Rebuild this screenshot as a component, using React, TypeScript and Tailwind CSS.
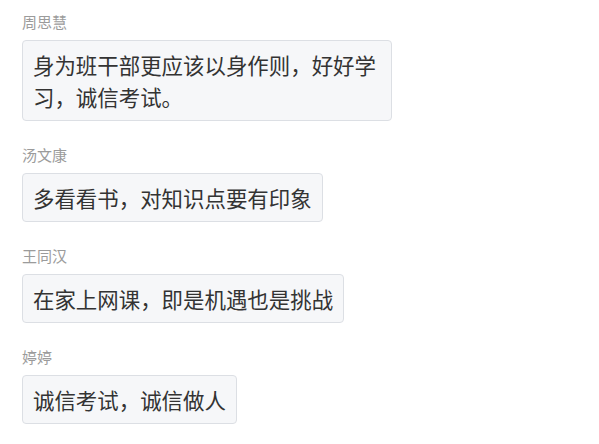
const messages = [
  { name: "周思慧", text: "身为班干部更应该以身作则，好好学习，诚信考试。" },
  { name: "汤文康", text: "多看看书，对知识点要有印象" },
  { name: "王同汉", text: "在家上网课，即是机遇也是挑战" },
  { name: "婷婷", text: "诚信考试，诚信做人" },
];

export default function App() {
  return (
    <div
      className="flex min-h-[444px] w-[599px] flex-col gap-[23px] bg-white px-[22px] pt-[11px]"
      style={{ fontFamily: '"Noto Sans CJK SC", "Noto Sans", sans-serif' }}
    >
      {messages.map((m) => (
        <div key={m.name} className="flex flex-col items-start">
          <div className="mb-[7px] text-[15px] leading-[22px] text-[#9b9b9b]">{m.name}</div>
          <div className="max-w-[370px] rounded-[4px] border border-[#dcdfe4] bg-[#f6f7f9] px-[10px] py-[7.5px] text-[21.45px] leading-[32px] text-[#333333]">
            {m.text}
          </div>
        </div>
      ))}
    </div>
  );
}
